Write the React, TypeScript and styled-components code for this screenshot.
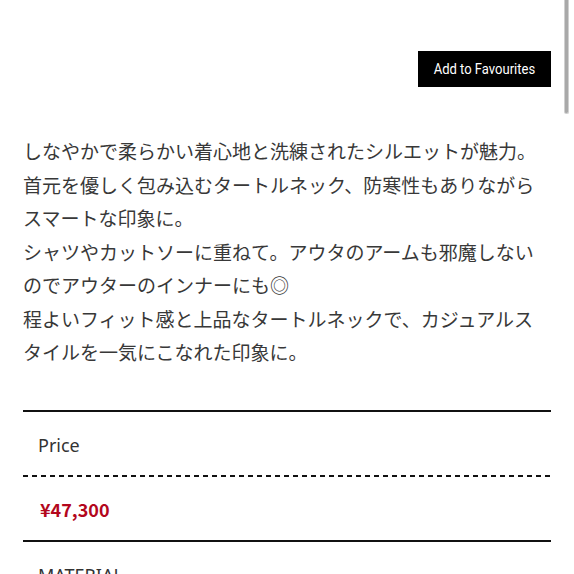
import React from "react";
import styled, { createGlobalStyle } from "styled-components";

const Global = createGlobalStyle`
  html, body { margin: 0; padding: 0; background: #fff; }
  body { overflow: hidden; }
`;

const Page = styled.div`
  position: relative;
  width: 574px;
  height: 574px;
  overflow: hidden;
  box-sizing: border-box;
  padding: 51px 23px 0 23px;
  font-family: "Noto Sans CJK JP", "Noto Sans", sans-serif;
  color: #333;
`;

const Toolbar = styled.div`
  display: flex;
  justify-content: flex-end;
`;

const FavButton = styled.button`
  width: 133px;
  height: 36px;
  border: none;
  background: #000;
  color: #fff;
  font-family: "Roboto", "Liberation Sans", sans-serif;
  font-size: 15.5px;
  padding: 0;
  display: flex;
  align-items: center;
  justify-content: center;
  cursor: pointer;
`;

const Condensed = styled.span`
  display: inline-block;
  transform: scaleX(0.84);
  white-space: nowrap;
`;

const Description = styled.p`
  margin: 47px 0 0 0;
  font-size: 19px;
  line-height: 33.5px;
  color: #383838;
  letter-spacing: 0;
`;

const SpecTable = styled.div`
  margin-top: 41px;
  border-top: 2px solid #111;
`;

const LabelCell = styled.div`
  height: 63px;
  box-sizing: border-box;
  padding: 3px 0 0 15px;
  display: flex;
  align-items: center;
  font-family: "Noto Sans", sans-serif;
  font-size: 18px;
  color: #333;
`;

const ValueCell = styled.div<{ $red?: boolean }>`
  height: 63px;
  box-sizing: border-box;
  padding: 1px 0 0 17px;
  display: flex;
  align-items: center;
  font-family: "Noto Sans CJK JP", "Noto Sans", sans-serif;
  font-size: 18px;
  font-weight: 600;
  color: ${(p) => (p.$red ? "#b3071d" : "#333")};
`;

const DashedRule = styled.div`
  height: 2px;
  background-image: repeating-linear-gradient(
    to right,
    #111 0 5px,
    transparent 5px 9px
  );
`;

const SolidRule = styled.div`
  height: 2px;
  background: #111;
`;

const ScrollThumb = styled.div`
  position: absolute;
  top: 0;
  right: 5px;
  width: 5px;
  height: 114px;
  background: #a9a9a9;
  border: 1px solid #d0d0d0;
  border-top: none;
  border-radius: 0 0 3px 3px;
  box-sizing: border-box;
`;

const rows = [
  { label: "Price", value: "¥47,300", red: true },
  { label: "MATERIAL", value: "", red: false },
];

export default function App() {
  return (
    <>
      <Global />
      <Page>
        <Toolbar>
          <FavButton>
            <Condensed>Add to Favourites</Condensed>
          </FavButton>
        </Toolbar>
        <Description>
          しなやかで柔らかい着心地と洗練されたシルエットが魅力。
          <br />
          首元を優しく包み込むタートルネック、防寒性もありながらスマートな印象に。
          <br />
          シャツやカットソーに重ねて。アウタのアームも邪魔しないのでアウターのインナーにも◎
          <br />
          程よいフィット感と上品なタートルネックで、カジュアルスタイルを一気にこなれた印象に。
        </Description>
        <SpecTable>
          {rows.map((r) => (
            <React.Fragment key={r.label}>
              <LabelCell>{r.label}</LabelCell>
              <DashedRule />
              <ValueCell $red={r.red}>{r.value}</ValueCell>
              <SolidRule />
            </React.Fragment>
          ))}
        </SpecTable>
        <ScrollThumb />
      </Page>
    </>
  );
}
